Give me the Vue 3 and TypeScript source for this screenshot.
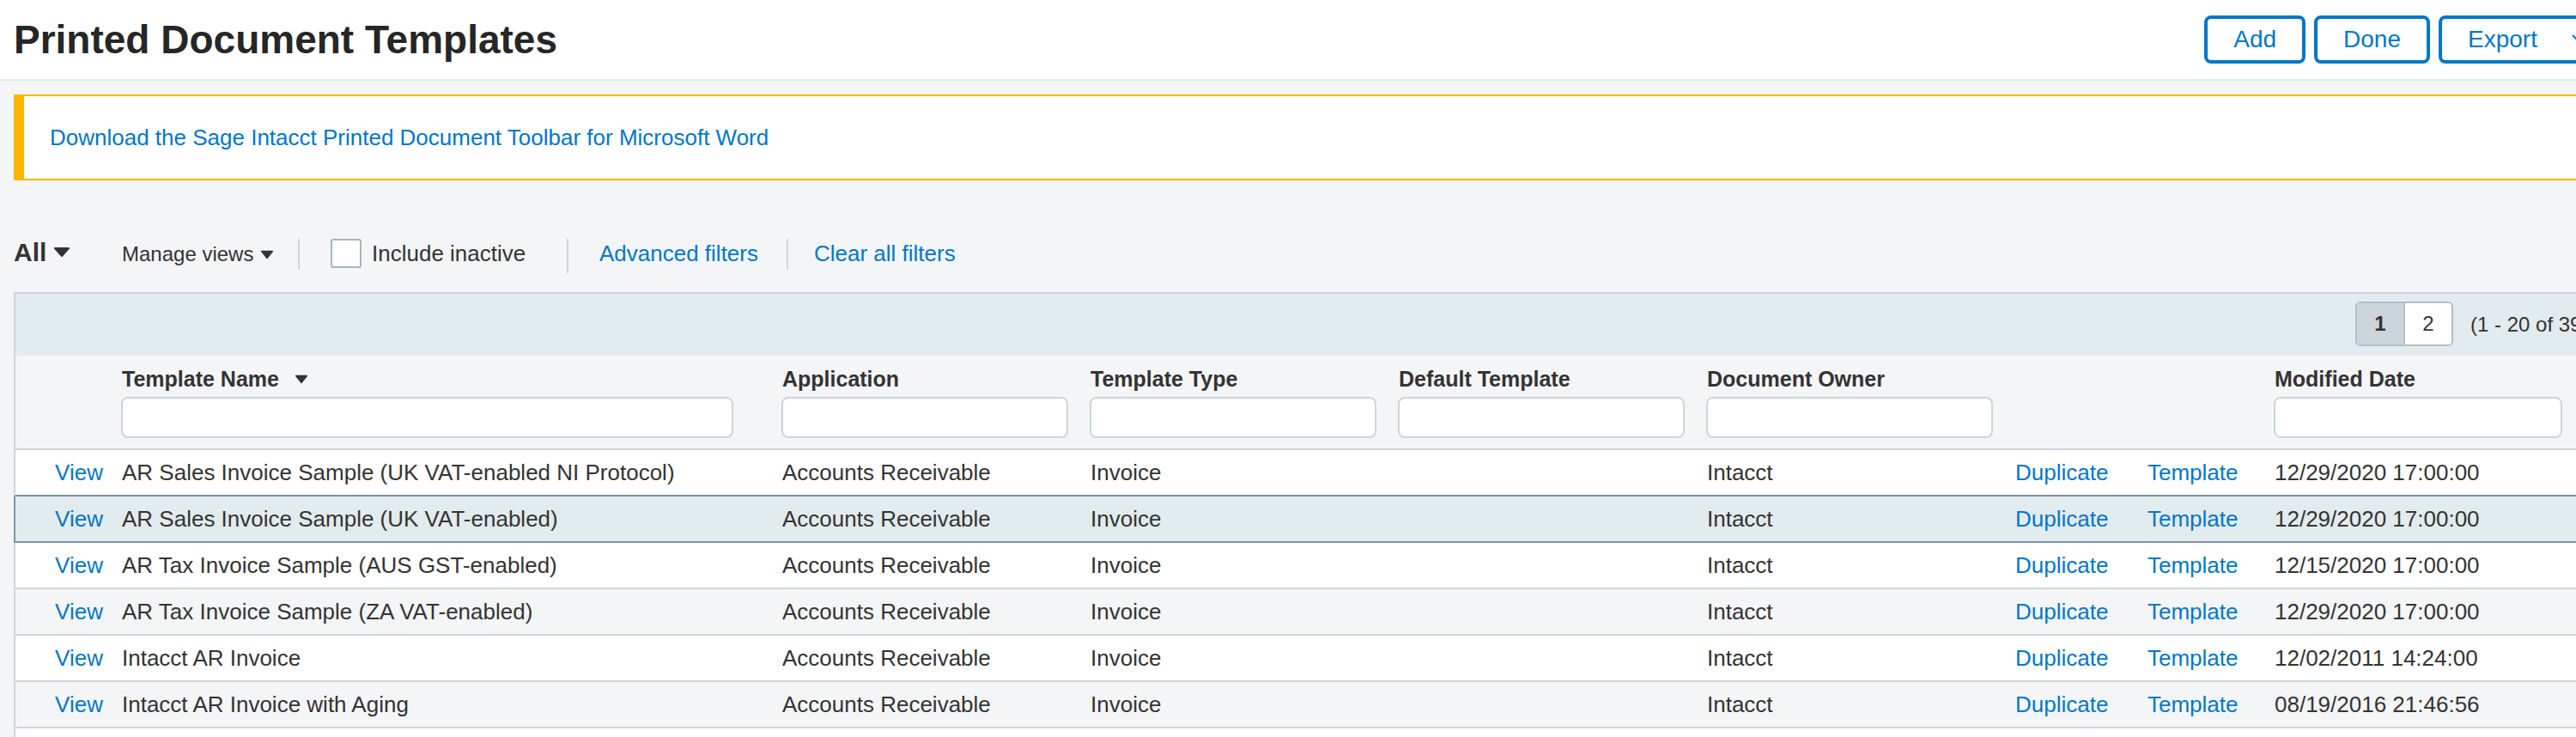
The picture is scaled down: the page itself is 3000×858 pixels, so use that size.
<script setup lang="ts">
import { ref } from 'vue'

interface Column {
  key: string
  label: string
  sorted?: boolean
}

interface TemplateRow {
  name: string
  application: string
  type: string
  owner: string
  modified: string
}

const includeInactive = ref(false)
const currentPage = ref(1)
const selectedRow = ref(1)
const pages: number[] = [1, 2]

const columns: Column[] = [
  { key: 'name', label: 'Template Name', sorted: true },
  { key: 'application', label: 'Application' },
  { key: 'type', label: 'Template Type' },
  { key: 'default', label: 'Default Template' },
  { key: 'owner', label: 'Document Owner' },
]

const makeRow = (name: string, modified: string): TemplateRow => ({
  name,
  application: 'Accounts Receivable',
  type: 'Invoice',
  owner: 'Intacct',
  modified,
})

const rows: TemplateRow[] = [
  makeRow('AR Sales Invoice Sample (UK VAT-enabled NI Protocol)', '12/29/2020 17:00:00'),
  makeRow('AR Sales Invoice Sample (UK VAT-enabled)', '12/29/2020 17:00:00'),
  makeRow('AR Tax Invoice Sample (AUS GST-enabled)', '12/15/2020 17:00:00'),
  makeRow('AR Tax Invoice Sample (ZA VAT-enabled)', '12/29/2020 17:00:00'),
  makeRow('Intacct AR Invoice', '12/02/2011 14:24:00'),
  makeRow('Intacct AR Invoice with Aging', '08/19/2016 21:46:56'),
]
</script>

<template>
  <div class="page">
    <header class="page-header">
      <h1>Printed Document Templates</h1>
      <div class="actions">
        <button type="button" class="action">Add</button>
        <button type="button" class="action">Done</button>
        <button type="button" class="action export">
          Export
          <svg class="chevron" viewBox="0 0 22 14" aria-hidden="true">
            <path d="M1 2 L11 12 L21 2" fill="none" stroke="currentColor" stroke-width="2" />
          </svg>
        </button>
      </div>
    </header>

    <section class="banner">
      <a href="#">Download the Sage Intacct Printed Document Toolbar for Microsoft Word</a>
    </section>

    <nav class="filters" aria-label="List filters">
      <button type="button" class="menu view-menu">
        All
        <svg class="caret large" viewBox="0 0 20 12" aria-hidden="true">
          <path d="M2 1 H18 L10 10 Z" fill="currentColor" stroke="currentColor" stroke-width="2" stroke-linejoin="round" />
        </svg>
      </button>
      <button type="button" class="menu manage-menu">
        Manage views
        <svg class="caret" viewBox="0 0 20 14" aria-hidden="true">
          <path d="M2 2 H18 L10 12 Z" fill="currentColor" stroke="currentColor" stroke-width="2" stroke-linejoin="round" />
        </svg>
      </button>
      <label class="inactive">
        <input v-model="includeInactive" type="checkbox" />
        Include inactive
      </label>
      <a href="#" class="advanced">Advanced filters</a>
      <a href="#" class="clear">Clear all filters</a>
    </nav>

    <main class="list">
      <div class="toolbar">
        <div class="pager">
          <button
            v-for="page in pages"
            :key="page"
            type="button"
            :class="{ current: page === currentPage }"
            @click="currentPage = page"
          >
            {{ page }}
          </button>
        </div>
        <span class="range">(1 - 20 of 39)</span>
      </div>

      <table>
        <colgroup>
          <col class="col-view" />
          <col />
          <col class="col-field" />
          <col class="col-field" />
          <col class="col-field" />
          <col class="col-field" />
          <col class="col-duplicate" />
          <col class="col-template" />
          <col class="col-modified" />
        </colgroup>
        <thead>
          <tr>
            <th></th>
            <th v-for="column in columns" :key="column.key" :class="{ wide: column.sorted }">
              <label :for="'filter-' + column.key">
                {{ column.label }}
                <svg v-if="column.sorted" class="caret" viewBox="0 0 20 14" aria-hidden="true">
                  <path d="M2 2 H18 L10 12 Z" fill="currentColor" stroke="currentColor" stroke-width="2" stroke-linejoin="round" />
                </svg>
              </label>
              <input :id="'filter-' + column.key" type="text" />
            </th>
            <th></th>
            <th></th>
            <th class="wide">
              <label for="filter-modified">Modified Date</label>
              <input id="filter-modified" type="text" />
            </th>
          </tr>
        </thead>
        <tbody>
          <tr
            v-for="(row, index) in rows"
            :key="row.name"
            :class="{ selected: index === selectedRow, 'before-selected': index === selectedRow - 1 }"
          >
            <td><a href="#">View</a></td>
            <td>{{ row.name }}</td>
            <td>{{ row.application }}</td>
            <td>{{ row.type }}</td>
            <td></td>
            <td>{{ row.owner }}</td>
            <td><a href="#">Duplicate</a></td>
            <td><a href="#">Template</a></td>
            <td>{{ row.modified }}</td>
          </tr>
        </tbody>
      </table>
      <div class="remainder"></div>
    </main>
  </div>
</template>

<style>
body {
  margin: 0;
  background: #f3f5f7;
}
</style>

<style scoped>
.page {
  --blue: #0077c8;
  --line: #ccd6db;
  --tint: #e2ebee;
  display: flex;
  flex-direction: column;
  height: 100vh;
  overflow: hidden;
  background: #f3f5f7;
  color: #333;
  font-family: "Liberation Sans", Arial, sans-serif;
  font-size: 26px;
}

.page * {
  box-sizing: border-box;
}

button,
input {
  font: inherit;
  color: inherit;
}

a {
  color: var(--blue);
  text-decoration: none;
}

.page-header {
  display: flex;
  flex: none;
  align-items: center;
  justify-content: space-between;
  height: 94px;
  margin-right: -40px;
  padding-left: 16px;
  background: #fff;
  border-bottom: 2px solid var(--tint);
}

h1 {
  margin: 0;
  color: #262626;
  font-size: 46px;
  line-height: 56px;
  white-space: nowrap;
}

.actions {
  display: flex;
  gap: 10px;
}

.action {
  height: 56px;
  padding: 0 30px;
  background: #fff;
  border: 4px solid var(--blue);
  border-radius: 8px;
  color: var(--blue);
  font-size: 28px;
  line-height: 44px;
}

.export {
  display: flex;
  align-items: center;
  gap: 40px;
  width: 200px;
}

.chevron {
  flex: none;
  width: 22px;
  height: 14px;
}

.banner {
  flex: none;
  height: 100px;
  margin: 16px -40px 0 16px;
  padding-left: 30px;
  background: #fff;
  border: 2px solid #ffb500;
  border-left-width: 12px;
  line-height: 96px;
}

.filters {
  display: flex;
  flex: none;
  align-items: flex-start;
  height: 62px;
  margin: 68px 0 0 16px;
  line-height: 34px;
  white-space: nowrap;
}

.menu {
  display: flex;
  align-items: center;
  padding: 0;
  background: none;
  border: 0;
}

.view-menu {
  width: 126px;
  gap: 8px;
  font-size: 30px;
  font-weight: bold;
  line-height: 32px;
}

.manage-menu {
  width: 205px;
  gap: 8px;
  font-size: 24px;
  line-height: 36px;
}

.caret {
  width: 16px;
  height: 11px;
}

.caret.large {
  width: 20px;
  height: 12px;
}

.inactive {
  display: flex;
  gap: 12px;
  width: 313px;
  height: 36px;
  padding-left: 36px;
  border-left: 2px solid var(--line);
}

.inactive input {
  appearance: none;
  width: 36px;
  height: 34px;
  margin: 0;
  background: #fff;
  border: 2px solid #a6b7bc;
  border-radius: 3px;
}

.advanced {
  width: 256px;
  height: 40px;
  padding-left: 36px;
  border-left: 2px solid var(--line);
}

.clear {
  height: 36px;
  padding-left: 30px;
  border-left: 2px solid var(--line);
}

.list {
  display: flex;
  flex: 1;
  flex-direction: column;
  min-height: 0;
  margin: 0 -40px 0 16px;
}

.toolbar {
  display: flex;
  flex: none;
  align-items: center;
  justify-content: flex-end;
  gap: 20px;
  height: 74px;
  background: var(--tint);
  border-top: 2px solid var(--line);
  border-left: 2px solid var(--line);
  font-size: 24px;
}

.pager {
  display: flex;
  margin-bottom: 2px;
  overflow: hidden;
  border: 2px solid #b0c0c8;
  border-radius: 6px;
}

.pager button {
  width: 54px;
  height: 48px;
  padding: 0;
  background: #fff;
  border: 0;
}

.pager button + button {
  width: 56px;
  border-left: 2px solid #b0c0c8;
}

.pager .current {
  background: #ccd5db;
  font-weight: bold;
}

.range {
  width: 163px;
  white-space: nowrap;
}

table {
  width: 100%;
  border-collapse: separate;
  border-spacing: 0;
  table-layout: fixed;
}

.col-view {
  width: 125px;
}

.col-field {
  width: 359px;
}

.col-duplicate {
  width: 154px;
}

.col-template {
  width: 148px;
}

.col-modified {
  width: 392px;
}

th {
  height: 110px;
  padding: 12px 25px 12px 0;
  border-bottom: 2px solid var(--line);
  font-size: 25px;
  text-align: left;
  vertical-align: top;
}

th.wide {
  padding-right: 56px;
}

th label {
  display: flex;
  align-items: center;
  gap: 18px;
  height: 30px;
  margin-bottom: 6px;
  padding-left: 1px;
  line-height: 30px;
  white-space: nowrap;
}

th input {
  display: block;
  width: 100%;
  height: 48px;
  padding: 0 12px;
  background: #fff;
  border: 2px solid var(--line);
  border-radius: 8px;
  font-weight: normal;
}

td {
  height: 54px;
  padding: 0 0 0 1px;
  background: #fff;
  border-bottom: 2px solid var(--line);
  line-height: 52px;
  white-space: nowrap;
}

tbody tr:nth-child(even) td {
  background: #f3f5f7;
}

th:first-child,
td:first-child {
  padding-right: 21px;
  border-left: 2px solid var(--line);
  text-align: right;
}

tbody tr.before-selected td {
  border-bottom-color: #8093a7;
}

tbody tr.selected td {
  background: var(--tint);
  border-color: #8093a7;
}

.remainder {
  flex: 1;
  background: #fff;
  border-left: 2px solid var(--line);
}
</style>
